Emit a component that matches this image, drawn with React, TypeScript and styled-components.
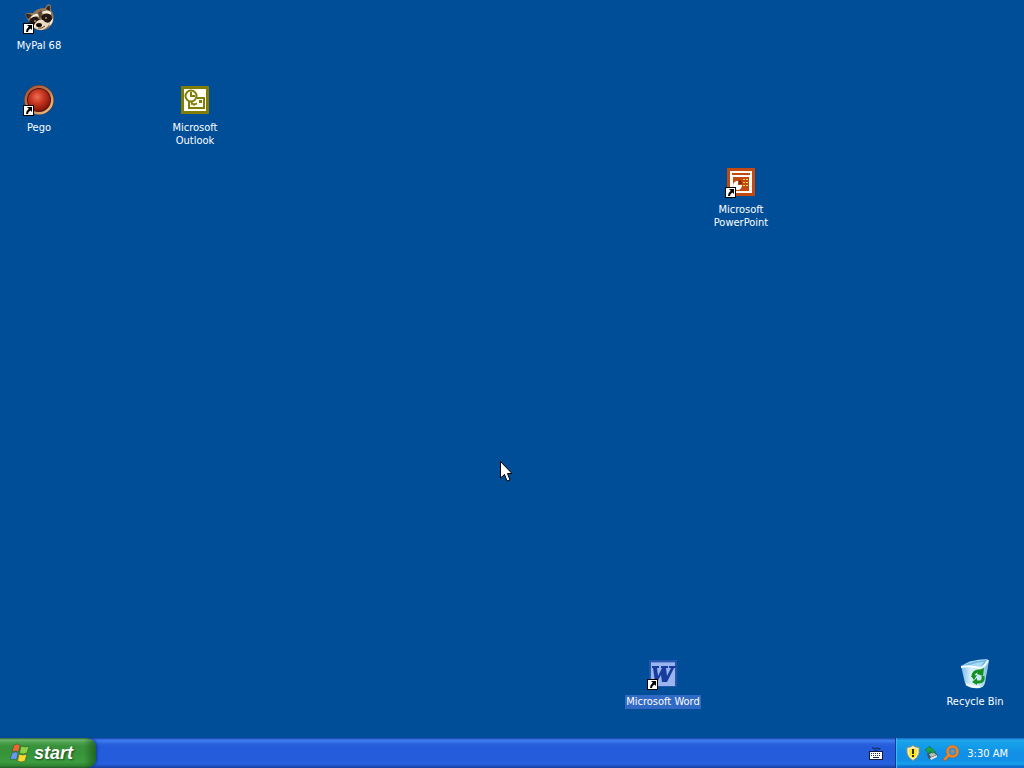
import React, { useState } from "react";
import styled, { createGlobalStyle } from "styled-components";

const GlobalStyle = createGlobalStyle`
  * { box-sizing: border-box; }
  body {
    margin: 0;
    background: #004e98;
    color: #fff;
    font-family: "DejaVu Sans Condensed", "Liberation Sans", sans-serif;
    font-size: 11px;
    line-height: 13px;
    overflow: hidden;
  }
  button { font: inherit; color: inherit; border: 0; background: none; cursor: default; }
`;

const Screen = styled.div`
  display: flex;
  flex-direction: column;
  height: 100vh;
`;

const Desktop = styled.main`
  flex: 1;
  min-height: 0;
  display: grid;
  grid-template-columns: repeat(auto-fill, 78px);
  grid-auto-rows: 82px;
  padding-top: 2px;
  overflow: hidden;
  position: relative;
`;

const Shortcut = styled.button<{ $col: number; $row: number }>`
  grid-column: ${(p) => p.$col};
  grid-row: ${(p) => p.$row};
  display: flex;
  flex-direction: column;
  align-items: center;
  gap: 5px;
  padding: 0;
  outline: none;
`;

const Picture = styled.span`
  position: relative;
  width: 32px;
  height: 32px;
  svg { display: block; }
`;

const ArrowBadge = styled.span`
  position: absolute;
  left: 0;
  bottom: 0;
`;

const Label = styled.span<{ $selected: boolean }>`
  max-width: 78px;
  padding: 0 1px 1px;
  text-align: center;
  background: ${(p) => (p.$selected ? "#316ac5" : "transparent")};
`;

const Pointer = styled.svg`
  position: absolute;
  left: 500px;
  top: 461px;
  pointer-events: none;
`;

const Taskbar = styled.footer`
  flex: none;
  display: flex;
  height: 30px;
  background: linear-gradient(
    #1941a5 0, #3a7cf0 2px, #3a7cee 3px, #2a62dc 6px, #245bdb 9px,
    #245ddb 22px, #2660e0 26px, #1f50c0 28px, #173f9c 30px
  );
`;

const StartButton = styled.button`
  display: flex;
  align-items: center;
  gap: 4px;
  width: 96px;
  padding: 0 0 1px 10px;
  border-radius: 0 9px 9px 0;
  background:
    linear-gradient(90deg, transparent 84px, rgba(15, 70, 20, 0.6) 96px),
    linear-gradient(#2a6b34 0, #6fb66f 2px, #4fa351 4px, #3a923c 8px, #379339 15px, #3c9c3e 24px, #2f8331 28px, #1f5c26 30px);
  box-shadow: 1px 0 3px #14389a;
`;

const StartText = styled.span`
  font: italic bold 18px/22px "Liberation Sans", sans-serif;
  text-shadow: 1px 1px 2px #1d4a1e;
`;

const LanguageButton = styled.button`
  margin-left: auto;
  padding: 2px 12px 0;
  svg { display: block; }
`;

const Tray = styled.div`
  display: flex;
  align-items: center;
  gap: 3px;
  padding: 0 16px 0 9px;
  border-left: 1px solid #0f3a8c;
  box-shadow: inset 1px 0 1px #3fc0f8;
  background: linear-gradient(
    #0c59b9 0, #22a8ee 2px, #1ba0ea 4px, #139ee9 8px, #1290e8 14px,
    #1190e6 22px, #16a0ee 26px, #0f78cc 28px, #095bc9 30px
  );
`;

const TrayButton = styled.button`
  padding: 0;
  height: 16px;
  svg { display: block; }
`;

const Clock = styled.time`
  margin-left: 5px;
`;

const Arrow = () => (
  <ArrowBadge>
    <svg width="11" height="11" viewBox="0 0 11 11">
      <path d="M0 0h11v11H0z" fill="#000" />
      <path d="M1 1h9v9H1z" fill="#fff" />
      <path d="M4 2h5v5L7.500 5.500Q5 6.500 5 9H3Q3 5.500 5.800 3.700Z" fill="#000" />
    </svg>
  </ArrowBadge>
);

const Raccoon = () => (
  <svg width="32" height="32" viewBox="0 0 32 32">
    <path d="M3 15 Q1 11 5 11 L10 11 Q14 6 22 6 L24 3 Q27 1 28 4 V8 Q32 13 30 20 Q27 27 20 28 Q12 29 9 24 L6 20Z" fill="#927458" />
    <path d="M3 14 Q2 11 6 12 L9 13 5 17Z M24 5 Q27 2 27 6 L27 9 23 7Z" fill="#35261e" />
    <path d="M8 15 Q11 11 15 12 L16 15 Q12 13 8 17Z M19 10 Q24 7 28 10 L28 13 Q24 10 20 12Z" fill="#f5ead8" />
    <path d="M6 20 Q8 14 14 15 L17 18 15 22 Q11 25 7 22Z M18 14 Q23 10 28 13 Q30 17 28 20 Q22 23 19 18Z" fill="#211714" />
    <path d="M15 11 L17 17 19 11 18 8Z" fill="#5f4633" />
    <path d="M11 23 Q14 17 20 18 Q23 22 27 20 Q25 26 19 28 Q13 28 11 25Z" fill="#ecdcc4" />
    <path d="M8 22 Q10 25 13 23 L12 26Z M27 20l3-4q0 6-4 8Z" fill="#fff1dc" />
    <circle cx="12" cy="19" r="1" fill="#b88d62" />
    <circle cx="23" cy="16" r="1" fill="#b88d62" />
    <ellipse cx="16" cy="23" rx="3" ry="2" fill="#150e0c" />
    <path d="M15 26 Q19 27 22 24" stroke="#5a3823" fill="none" />
  </svg>
);

const Ball = () => (
  <svg width="32" height="32" viewBox="0 0 32 32">
    <defs>
      <radialGradient id="ball" cx="42%" cy="36%" r="65%">
        <stop offset="0" stopColor="#ee7055" />
        <stop offset=".45" stopColor="#c93822" />
        <stop offset="1" stopColor="#85150b" />
      </radialGradient>
      <linearGradient id="rim" x2="1" y2="1">
        <stop offset="0" stopColor="#a4563c" />
        <stop offset=".5" stopColor="#bd7950" />
        <stop offset="1" stopColor="#f3cf8d" />
      </linearGradient>
    </defs>
    <circle cx="16" cy="16" r="15" fill="#6d2b1c" />
    <circle cx="16" cy="16" r="13" fill="none" stroke="url(#rim)" strokeWidth="3" />
    <circle cx="16" cy="16" r="12" fill="#5c150d" />
    <circle cx="16" cy="16" r="11" fill="url(#ball)" />
  </svg>
);

const Outlook = () => (
  <svg width="32" height="32" viewBox="0 0 32 32">
    <path d="M2 2h28v28H2z" fill="#807c08" />
    <path d="M5 5h22v22H5z" fill="#fffff4" />
    <g fill="none" stroke="#807c08" strokeWidth="2">
      <path d="M18 14h7v10H10v-7" />
      <circle cx="12" cy="12" r="5.500" fill="#fffff4" />
      <path d="M12 8v4h4" />
      <path d="M12 20h6M12 18l3 3 3-2" strokeWidth="1.500" />
    </g>
    <path d="M20 16h3v3h-3z" fill="#807c08" />
  </svg>
);

const PowerPoint = () => (
  <svg width="32" height="32" viewBox="0 0 32 32">
    <path d="M2 2h28v28H2z" fill="#c04a12" />
    <path d="M5 5h22v22H5z" fill="#fffaf2" />
    <path d="M7 7h18v2H7zM8 11h16v14H8z" fill="#c04a12" />
    <path d="M9 9h14v2H9z" fill="#fff" />
    <path d="M13 15v4h4a4.500 4.500 0 1 1-4-4Z" fill="#fff" />
    <path d="M14 14a4 4 0 0 1 3 4h-3Z" fill="#7e2b0b" />
    <path d="M18 13h2v1h-2zM18 16h2v1h-2zM18 19h2v1h-2zM21 13h2v1h-2zM21 16h2v1h-2zM21 19h2v1h-2z" fill="#f3d74e" />
  </svg>
);

const Word = () => (
  <svg width="32" height="32" viewBox="0 0 32 32">
    <path d="M2 2h28v27H2z" fill="#2456b0" />
    <path d="M4 4h24v24H4z" fill="#9ab5ee" />
    <path d="M4 4h24v1H4z" fill="#7192dc" />
    <path d="M5 8h7v2h-2l1 8 4-8h-1V8h7v2h-2l1 8 4-8h-2V8h7v2h-2l-7 14h-5l-1-7-4 7H8L6 10H5Z" fill="#183c9e" />
  </svg>
);

const RecycleBin = () => (
  <svg width="32" height="32" viewBox="0 0 32 32">
    <defs>
      <linearGradient id="bin" x2="1">
        <stop offset="0" stopColor="#79b9ec" />
        <stop offset=".35" stopColor="#d8effa" />
        <stop offset=".7" stopColor="#c1e5f4" />
        <stop offset="1" stopColor="#77b5df" />
      </linearGradient>
    </defs>
    <path d="M2 8 Q10 2 28 1 L30 3 26 25 Q25 29 21 30 Q13 31 8 28 L6 25Z" fill="url(#bin)" />
    <path d="M3 8 Q14 2 28 2 L23 10 Q12 7 3 10Z" fill="#72b8e9" />
    <path d="M9 8 Q17 4 25 4 L21 9 Q15 6 9 8Z" fill="#a9dcf7" />
    <path d="M2 9 Q13 7 21 10 Q27 8 29 2" fill="none" stroke="#f4ffff" strokeWidth="2" />
    <path d="M7 26 Q13 29 21 29" fill="none" stroke="#f3ffff" strokeWidth="2" />
    <g fill="none" stroke="#149020" strokeWidth="3">
      <path d="M14 19 Q14 13 20 13 L22 14M24 18 Q25 24 20 24 L17 24" />
    </g>
    <path d="M20 12 L25 10 24 18 18 16ZM18 20 L18 27 13 24ZM12 18 L18 17 15 22Z" fill="#149020" />
  </svg>
);

const WindowsFlag = () => (
  <svg width="20" height="20" viewBox="0 0 20 20">
    <g stroke="#286131" strokeWidth=".6">
      <path d="M4 2 Q7 0 10 2 L8.500 9 Q6 7 2 9Z" fill="#f16632" />
      <path d="M11 3 Q15 5 19 3 L17 10 Q13 12 9.500 10Z" fill="#8bd345" />
      <path d="M2 10 Q6 8 8 10 L6.500 17 Q4 15 0 17Z" fill="#6599f8" />
      <path d="M9 11 Q13 13 17 11 L15 18 Q11 20 7.500 18Z" fill="#ffd630" />
    </g>
  </svg>
);

const Keyboard = () => (
  <svg width="14" height="14" viewBox="0 0 14 14">
    <path d="M3 1h2v1h2V1h2v1h2V1M5 4h4" fill="none" stroke="#13265e" />
    <path d="M0 4h14v9H0z" fill="#101b40" />
    <path d="M1 5h12v7H1z" fill="#fff" />
    <path d="M2 6.500h10M2 8.500h10" stroke="#1b2855" strokeDasharray="1 1" />
    <path d="M4 10.500h6" stroke="#1b2855" />
  </svg>
);

const Shield = () => (
  <svg width="16" height="16" viewBox="0 0 16 16">
    <path d="M8 .5 Q10 2.500 14 2.500 V8 Q13 13 8 15.500 Q3 13 2 8 V2.500 Q6 2.500 8 .5Z" fill="#f2f0d4" stroke="#9a9564" />
    <path d="M8 3 Q10 4 12 4 V8 Q11.500 11.500 8 13.500 Q4.500 11.500 4 8 V4 Q6 4 8 3Z" fill="#ffe51b" />
    <path d="M7 4h2v5H7zM7 10h2v2H7z" fill="#302c10" />
  </svg>
);

const Hardware = () => (
  <svg width="16" height="16" viewBox="0 0 16 16">
    <path d="M3 8 L11 6 14 11 7 15 4 13Z" fill="#3c5860" />
    <path d="M5 9 L10 7 12 10 7 12Z" fill="#b4c3c4" />
    <path d="M6 13 L13 10V12L7 15Z" fill="#e1e8e8" />
    <path d="M1 5 L6 1V3Q10 3 11 8L8 8Q8 6 6 6V9Z" fill="#20a346" stroke="#087232" strokeWidth=".5" />
  </svg>
);

const Magnifier = () => (
  <svg width="16" height="16" viewBox="0 0 16 16">
    <path d="M1.500 14.500 L6 10" stroke="#c0601c" strokeWidth="3" strokeLinecap="round" />
    <circle cx="9.500" cy="6.500" r="5" fill="#3896dc" stroke="#c0601c" strokeWidth="3" />
    <circle cx="9.500" cy="6.500" r="5" fill="none" stroke="#f28a27" strokeWidth="2" />
    <path d="M2 14 L6 10" stroke="#f28a27" strokeWidth="2" strokeLinecap="round" />
    <circle cx="9.500" cy="6.500" r="1.200" fill="#e88429" />
  </svg>
);

const shortcuts = [
  { name: "MyPal 68", col: 1, row: 1, Icon: Raccoon, linked: true },
  { name: "Pego", col: 1, row: 2, Icon: Ball, linked: true },
  { name: "Microsoft Outlook", col: 3, row: 2, Icon: Outlook, linked: false },
  { name: "Microsoft PowerPoint", col: 10, row: 3, Icon: PowerPoint, linked: true },
  { name: "Microsoft Word", col: 9, row: 9, Icon: Word, linked: true },
  { name: "Recycle Bin", col: 13, row: 9, Icon: RecycleBin, linked: false },
];

export default function App() {
  const [selected, setSelected] = useState("Microsoft Word");
  return (
    <Screen>
      <GlobalStyle />
      <Desktop>
        {shortcuts.map(({ name, col, row, Icon, linked }) => (
          <Shortcut key={name} $col={col} $row={row} onClick={() => setSelected(name)}>
            <Picture>
              <Icon />
              {linked && <Arrow />}
            </Picture>
            <Label $selected={name === selected}>{name}</Label>
          </Shortcut>
        ))}
        <Pointer width="12" height="21" viewBox="0 0 12 21">
          <path d="M.5 .5V17L4.500 13.500 7 20 10 19 7.500 12.500H12Z" fill="#fff" stroke="#000" />
        </Pointer>
      </Desktop>
      <Taskbar>
        <StartButton>
          <WindowsFlag />
          <StartText>start</StartText>
        </StartButton>
        <LanguageButton aria-label="Keyboard">
          <Keyboard />
        </LanguageButton>
        <Tray>
          <TrayButton aria-label="Security alerts"><Shield /></TrayButton>
          <TrayButton aria-label="Safely remove hardware"><Hardware /></TrayButton>
          <TrayButton aria-label="Search"><Magnifier /></TrayButton>
          <Clock>3:30 AM</Clock>
        </Tray>
      </Taskbar>
    </Screen>
  );
}
